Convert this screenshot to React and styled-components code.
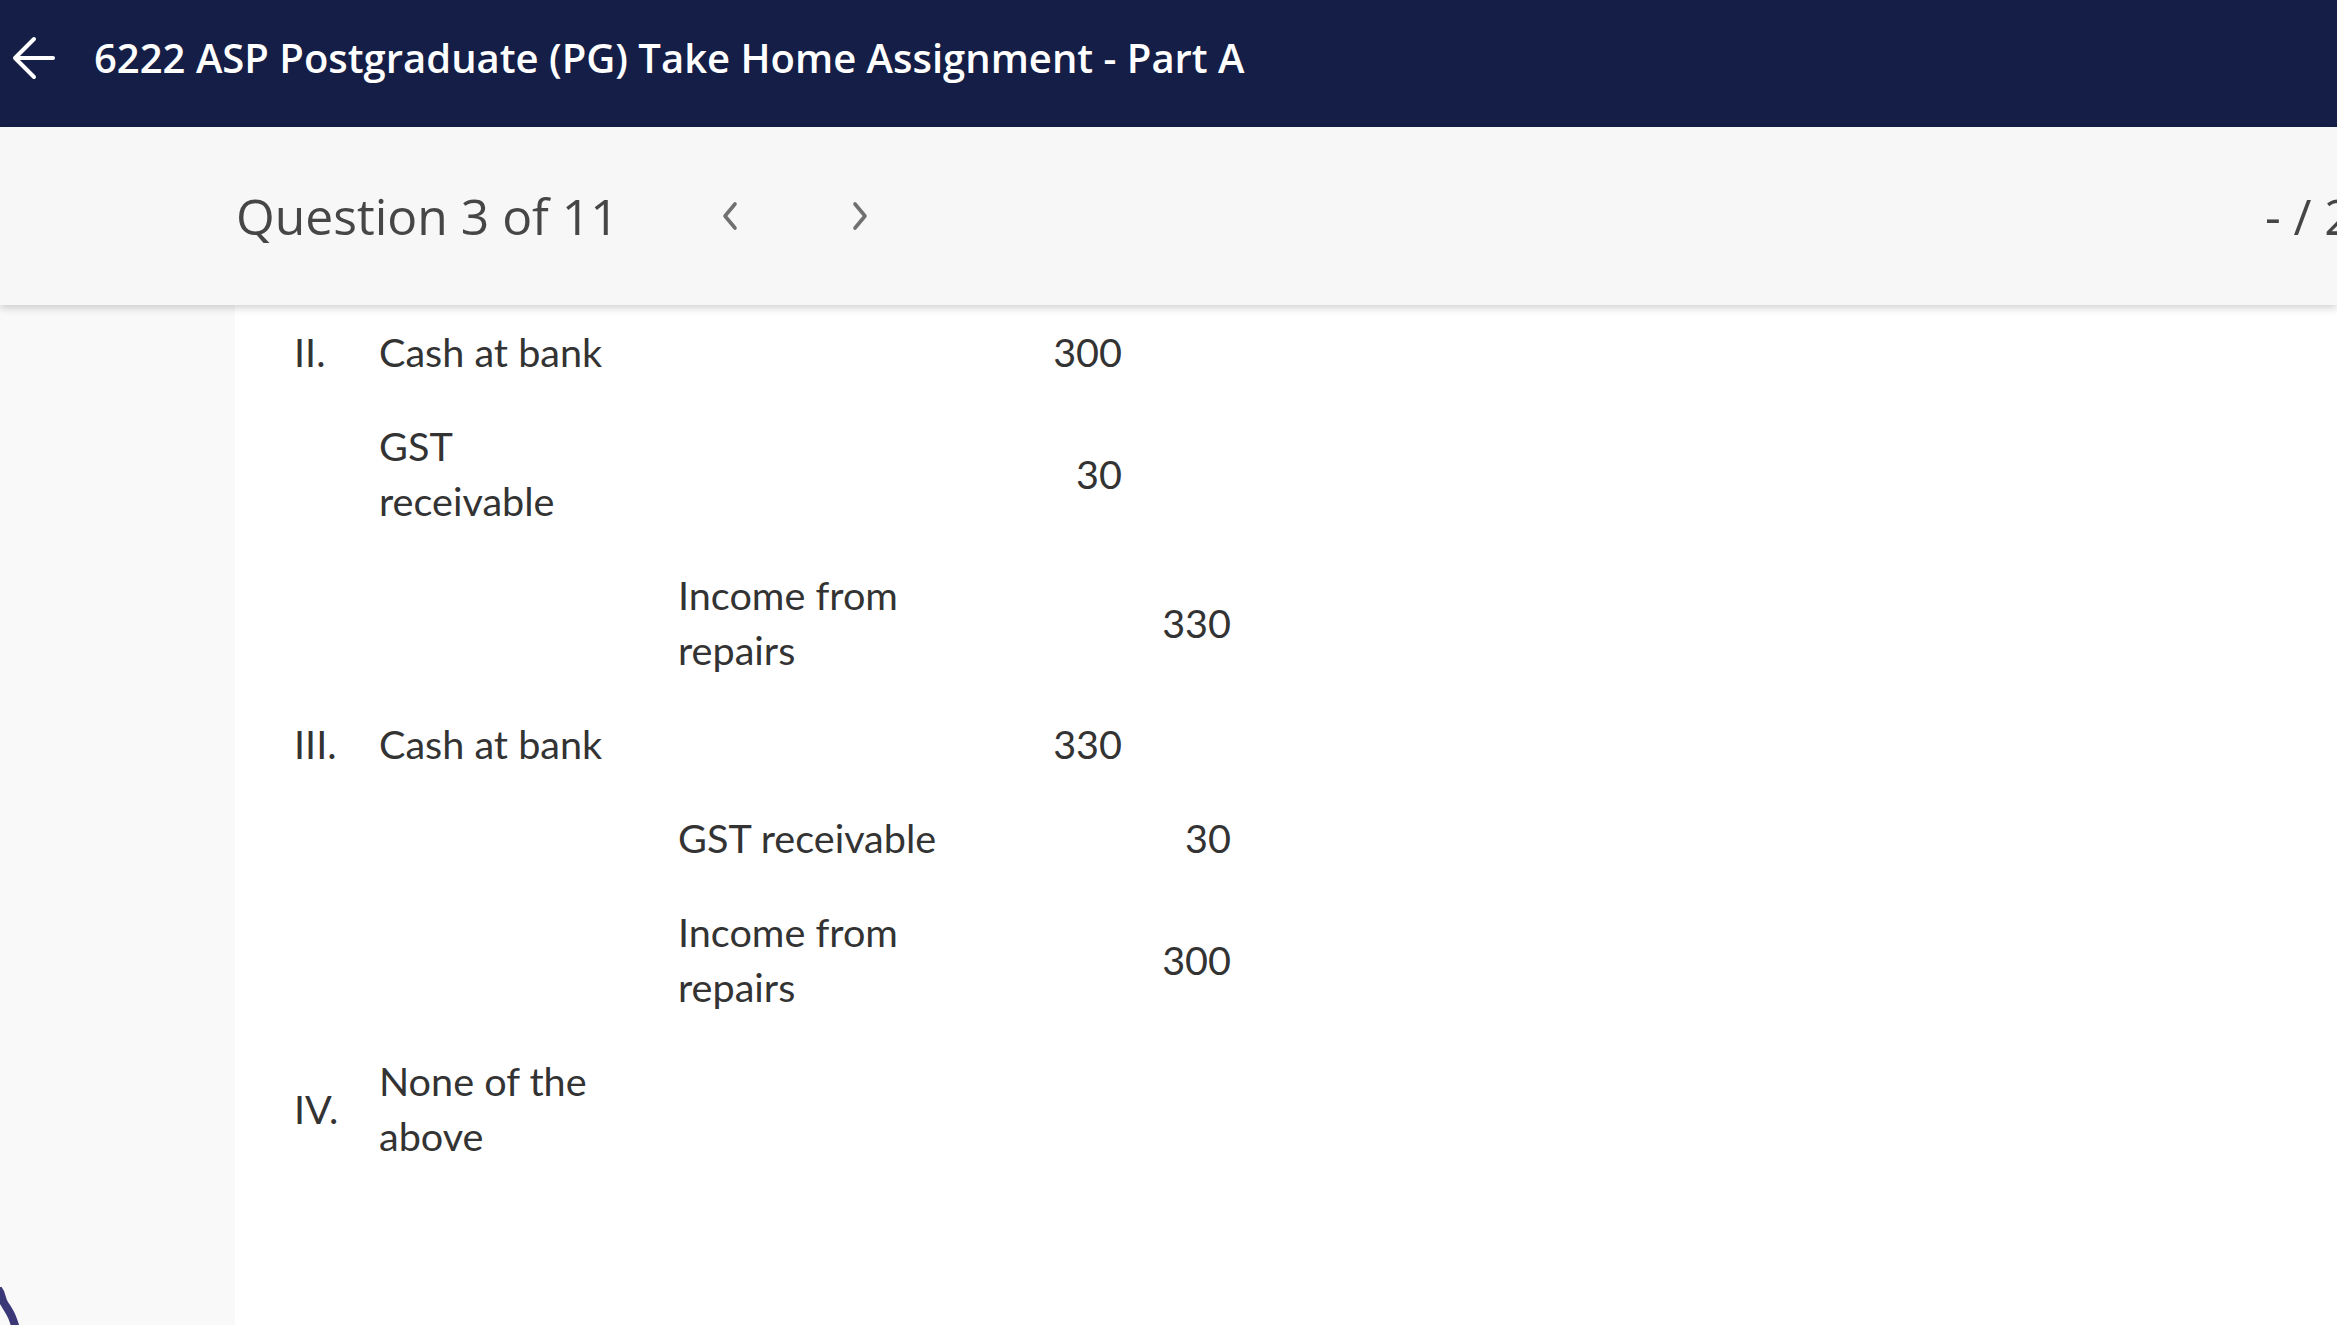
import React from 'react'
import styled, { createGlobalStyle } from 'styled-components'

const GlobalStyle = createGlobalStyle`
  html, body {
    margin: 0;
    padding: 0;
    overflow: hidden;
    background: #ffffff;
    font-family: Lato, "Noto Sans", sans-serif;
  }
`

const rows = [
  { num: 'II.', debit: 'Cash at bank', debitAmt: '300' },
  { debit: 'GST receivable', debitAmt: '30' },
  { credit: 'Income from repairs', creditAmt: '330' },
  { num: 'III.', debit: 'Cash at bank', debitAmt: '330' },
  { credit: 'GST receivable', creditAmt: '30' },
  { credit: 'Income from repairs', creditAmt: '300' },
  { num: 'IV.', debit: 'None of the above' },
]

export default function App() {
  return (
    <Page>
      <GlobalStyle />
      <Header>
        <BackButton aria-label="Back">
          <svg width="44" height="44" viewBox="0 0 44 44" fill="none" stroke="#fff" strokeWidth="4" strokeLinecap="round" strokeLinejoin="round">
            <path d="M41 22H4" />
            <path d="M22 3L3 22l19 19" />
          </svg>
        </BackButton>
        <Title>6222 ASP Postgraduate (PG) Take Home Assignment - Part A</Title>
      </Header>

      <QuestionBar>
        <QuestionLabel>Question 3 of 11</QuestionLabel>
        <NavButton aria-label="Previous" $first>
          <svg width="20" height="30" viewBox="0 0 20 30" fill="none" stroke="#707070" strokeWidth="3.6" strokeLinecap="round" strokeLinejoin="round">
            <path d="M15 3L5 15l10 12" />
          </svg>
        </NavButton>
        <NavButton aria-label="Next">
          <svg width="20" height="30" viewBox="0 0 20 30" fill="none" stroke="#707070" strokeWidth="3.6" strokeLinecap="round" strokeLinejoin="round">
            <path d="M5 3l10 12L5 27" />
          </svg>
        </NavButton>
        <Score>- / 20</Score>
      </QuestionBar>

      <Body>
        <Sidebar />
        <Content>
          {rows.map((r, i) => (
            <Row key={i}>
              <Num>{r.num}</Num>
              <Account>{r.debit}</Account>
              <Account $wide>{r.credit}</Account>
              <Amount>{r.debitAmt}</Amount>
              <Amount>{r.creditAmt}</Amount>
            </Row>
          ))}
        </Content>
        <Squiggle width="24" height="42" viewBox="0 0 24 42" fill="none">
          <path d="M2 2c4 4 3 9 6 14s6 9 8 14 3 8 4 12" stroke="#3b3878" strokeWidth="8" strokeLinecap="round" />
        </Squiggle>
      </Body>
    </Page>
  )
}

const Page = styled.div`
  display: flex;
  flex-direction: column;
  height: 100vh;
  width: 100vw;
  overflow: hidden;
`

const Header = styled.header`
  display: flex;
  align-items: center;
  height: 127px;
  box-sizing: border-box;
  flex-shrink: 0;
  padding: 0 0 12px 12px;
  background: #141e46;
  color: #ffffff;
`

const BackButton = styled.button`
  display: flex;
  align-items: center;
  justify-content: center;
  padding: 0;
  border: none;
  background: transparent;
  margin-right: 38px;
  cursor: pointer;
`

const Title = styled.h1`
  margin: 0;
  font-family: "Open Sans", sans-serif;
  font-weight: 600;
  font-size: 40px;
  white-space: nowrap;
`

const QuestionBar = styled.div`
  position: relative;
  z-index: 2;
  display: flex;
  align-items: center;
  height: 178px;
  flex-shrink: 0;
  padding-left: 236px;
  background: #f7f7f7;
  box-shadow: 0 3px 8px rgba(0, 0, 0, 0.18);
`

const QuestionLabel = styled.div`
  font-family: "Open Sans", sans-serif;
  font-size: 49.8px;
  font-weight: 400;
  color: #464646;
  white-space: nowrap;
`

const NavButton = styled.button`
  display: flex;
  align-items: center;
  justify-content: center;
  width: 60px;
  height: 60px;
  padding: 0;
  margin-left: ${p => (p.$first ? '81px' : '70px')};
  border: none;
  background: transparent;
  cursor: pointer;
`

const Score = styled.div`
  margin-left: auto;
  width: 72px;
  flex-shrink: 0;
  font-family: "Open Sans", sans-serif;
  font-size: 49px;
  color: #464646;
  white-space: nowrap;
`

const Body = styled.div`
  position: relative;
  display: flex;
  flex: 1;
  min-height: 0;
`

const Sidebar = styled.aside`
  width: 235px;
  flex-shrink: 0;
  background: #f9f9f9;
`

const Content = styled.main`
  flex: 1;
  padding-left: 59px;
  background: #ffffff;
  color: #333333;
`

const Row = styled.div`
  display: grid;
  grid-template-columns: 85px 299px 310px 134px 109px;
  align-items: center;
  padding: 19px 0 20px;
  font-family: Lato, sans-serif;
  font-size: 39.6px;
  line-height: 55px;
`

const Num = styled.div``

const Account = styled.div`
  padding-right: ${p => (p.$wide ? '20px' : '49px')};
`

const Amount = styled.div`
  text-align: right;
`

const Squiggle = styled.svg`
  position: absolute;
  left: -4px;
  bottom: -4px;
`
